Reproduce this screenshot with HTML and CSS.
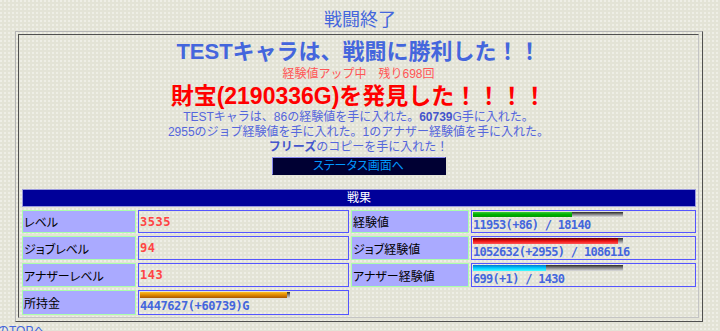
FILE: index.html
```html
<!DOCTYPE html>
<html lang="ja">
<head>
<meta charset="UTF-8">
<meta name="viewport" content="width=device-width, initial-scale=1.0">
<title>戦闘終了</title>
<link rel="stylesheet" href="styles.css">
</head>
<body>

<div class="page-title">戦闘終了</div>

<div class="frame">
    <div class="frame-inner">
        <div class="win">TESTキャラは、戦闘に勝利した！！</div>
        <div class="boost">経験値アップ中　残り698回</div>
        <div class="treasure">財宝(2190336G)を発見した！！！！</div>
        <div class="msg">TESTキャラは、86の経験値を手に入れた。<b class="num-b">60739</b>G手に入れた。</div>
        <div class="msg">2955のジョブ経験値を手に入れた。1のアナザー経験値を手に入れた。</div>
        <div class="msg"><b>フリーズ</b>のコピーを手に入れた！</div>
        <a class="status-button" href="#">ステータス画面へ</a>

        <!-- results table -->
        <div class="results">
            <div class="results-head">戦果</div>

            <div class="label">レベル</div>
            <div class="value"><span class="level">3535</span></div>
            <div class="label">経験値</div>
            <div class="value">
                <div class="bar"><div class="fill exp" style="width: 65.9%"></div></div>
                <div class="num">11953(+86) / 18140</div>
            </div>

            <div class="label">ジョブレベル</div>
            <div class="value"><span class="level">94</span></div>
            <div class="label">ジョブ経験値</div>
            <div class="value">
                <div class="bar"><div class="fill job" style="width: 96.9%"></div></div>
                <div class="num">1052632(+2955) / 1086116</div>
            </div>

            <div class="label">アナザーレベル</div>
            <div class="value"><span class="level">143</span></div>
            <div class="label">アナザー経験値</div>
            <div class="value">
                <div class="bar"><div class="fill another" style="width: 48.9%"></div></div>
                <div class="num">699(+1) / 1430</div>
            </div>

            <div class="label">所持金</div>
            <div class="value">
                <div class="bar"><div class="fill gold" style="width: 98%"></div></div>
                <div class="num gold-num">4447627(+60739)G</div>
            </div>
        </div>
    </div>
</div>

<div class="top-link"><a href="#">のTOPへ</a></div>

</body>
</html>
```

FILE: styles.css
```css
body {
    margin: 0;
    padding: 0;
    background-color: #e3e3d6;
    background-image: radial-gradient(circle at 1px 1px, #eeeee6 0.8px, transparent 1px);
    background-size: 4px 4px;
    font-family: "Liberation Sans", "Noto Sans CJK JP", sans-serif;
    color: #000;
}
.page-title {
    padding-top: 9px;
    line-height: 22px;
    font-size: 18px;
    color: #4466dd;
    text-align: center;
}
.frame {
    box-sizing: border-box;
    width: 688px;
    margin-left: 15px;
    padding: 2px 3px 3px 2px;
    border: 1px solid;
    border-color: #b4b4b4 #505050 #505050 #b4b4b4;
}
.frame-inner {
    padding: 3px 0 2px 0;
    border: 1px solid;
    border-color: #505050 #c4c4c4 #c4c4c4 #505050;
    text-align: center;
}
.win {
    font-size: 22px;
    font-weight: bold;
    line-height: 28px;
    color: #4466dd;
}
.boost {
    font-size: 12px;
    line-height: 16px;
    color: #ff5555;
}
.treasure {
    font-size: 23px;
    font-weight: bold;
    line-height: 28px;
    color: #ff0000;
}
.msg {
    font-size: 12px;
    line-height: 15px;
    color: #5566dd;
}
.msg b {
    color: #4455cc;
}
.status-button {
    display: block;
    box-sizing: border-box;
    width: 174px;
    height: 18px;
    margin: 2px auto 0 auto;
    border: 1px solid;
    border-color: #8888ee #000033 #000033 #8888ee;
    background-color: #000033;
    color: #0099ff;
    font-size: 12px;
    line-height: 16px;
    text-decoration: none;
    font-feature-settings: "palt";
}
.results {
    display: grid;
    grid-template-columns: 114px 211px 118px 225px;
    grid-template-rows: 18px 23px 24px 24px 25px;
    gap: 3px 2px;
    margin: 14px 0 0 3px;
    text-align: left;
}
.results-head {
    grid-column: 1 / -1;
    background-color: #000099;
    border: 1px solid #9999dd;
    color: white;
    font-size: 12px;
    line-height: 16px;
    text-align: center;
}
.label {
    display: flex;
    align-items: center;
    padding-left: 1px;
    background-color: #aaaaff;
    border: 1px solid #aaffaa;
    font-size: 12px;
    font-feature-settings: "palt";
}
.value {
    display: flex;
    flex-direction: column;
    justify-content: center;
    padding-left: 1px;
    border: 1px solid #5555ff;
}
.value .bar {
    margin-top: 1px;
}
.level {
    font-family: "DejaVu Sans Mono", monospace;
    font-weight: bold;
    font-size: 12px;
    letter-spacing: 0.5px;
    color: #ff4444;
}
.bar {
    width: 150px;
    height: 6px;
    background: linear-gradient(#2a2a2a, #888888, #dddddd);
}
.value:has(.bar) {
    justify-content: flex-start;
}
.fill {
    height: 100%;
}
.fill.exp {
    background: linear-gradient(#33cc33, #00b000, #009900);
}
.fill.job {
    background: linear-gradient(#660000, #ee1111, #ff5555);
}
.fill.another {
    background: linear-gradient(#0077cc, #00ccff, #44ffff);
}
.fill.gold {
    background: linear-gradient(#ffbb22, #dd8800, #aa5500);
}
.num {
    margin-top: 1px;
    font-family: "DejaVu Sans Mono", monospace;
    font-weight: bold;
    font-size: 12px;
    line-height: 14px;
    letter-spacing: -0.7px;
    color: #4466dd;
}
.gold-num {
    letter-spacing: -0.4px;
}
.top-link {
    margin-top: 1px;
    margin-left: -3px;
    font-size: 12px;
    line-height: 16px;
}
.top-link a {
    color: #4466dd;
    text-decoration: none;
}
```
